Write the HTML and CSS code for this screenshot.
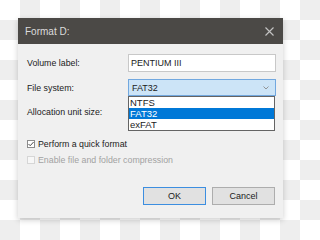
FILE: index.html
```html
<!DOCTYPE html>
<html>
<head>
<meta charset="utf-8">
<link rel="stylesheet" href="styles.css">
</head>
<body>
<div class="dialog">
  <div class="titlebar">
    <span class="title">Format D:</span>
    <svg class="close" width="9" height="9" viewBox="0 0 9 9"><path d="M0.5 0.5L8.5 8.5M8.5 0.5L0.5 8.5" stroke="#c4c4c4" stroke-width="1.1" fill="none"/></svg>
  </div>
  <div class="content">
    <div class="form">
      <label class="lbl">Volume label:</label>
      <div class="input">PENTIUM III</div>
      <label class="lbl">File system:</label>
      <div class="combo">
        <div class="select">
          <span>FAT32</span>
          <svg width="6" height="4" viewBox="0 0 6 4"><path d="M0.5 0.5L3 3L5.5 0.5" stroke="#8a8a8a" stroke-width="0.9" fill="none"/></svg>
        </div>
        <ul class="list">
          <li>NTFS</li>
          <li class="sel">FAT32</li>
          <li>exFAT</li>
        </ul>
      </div>
      <label class="lbl">Allocation unit size:</label>
      <div></div>
    </div>
    <div class="checks">
      <div class="check">
        <span class="box">
          <svg width="8" height="8" viewBox="0 0 8 8"><path d="M1.5 4L3.2 5.7L6.6 2" stroke="#333" stroke-width="0.9" fill="none"/></svg>
        </span>
        <span>Perform a quick format</span>
      </div>
      <div class="check disabled">
        <span class="box"></span>
        <span>Enable file and folder compression</span>
      </div>
    </div>
    <div class="buttons">
      <div class="btn default">OK</div>
      <div class="btn">Cancel</div>
    </div>
  </div>
</div>
</body>
</html>
```

FILE: styles.css
```css
html {
  background: repeating-conic-gradient(#eeeeee 0 25%, #ffffff 0 50%) 0 0 / 40px 40px;
  height: 100%;
}
body {
  margin: 0;
  padding: 18px;
  font-family: "Liberation Sans", Arial, sans-serif;
  font-size: 8.8px;
  color: #1b1b1b;
}
.dialog {
  width: 265px;
  height: 200px;
  background: #f0f0f0;
  box-shadow: 0 2px 6px rgba(0, 0, 0, 0.2);
  display: flex;
  flex-direction: column;
}
.titlebar {
  height: 26px;
  background: #4b4946;
  display: flex;
  align-items: center;
  justify-content: space-between;
  padding: 0 9px 0 7px;
  flex-shrink: 0;
}
.title {
  color: #dcdcdc;
  font-size: 10px;
}
.content {
  padding: 10px 7px 0 9px;
}
.form {
  display: grid;
  grid-template-columns: 101px 148px;
  grid-template-rows: 18px 17px 17px;
  row-gap: 7px;
  align-items: center;
}
.input {
  height: 18px;
  box-sizing: border-box;
  border: 1px solid #c8c8c8;
  background: #fff;
  padding: 0 2px;
  display: flex;
  align-items: center;
  font-size: 9px;
}
.combo {
  position: relative;
  height: 17px;
}
.select {
  height: 17px;
  box-sizing: border-box;
  border: 1px solid #72a8df;
  background: #cce4f7;
  display: flex;
  align-items: center;
  justify-content: space-between;
  padding: 0 6px 0 3px;
  font-size: 9px;
}
.list {
  position: absolute;
  top: 17px;
  left: 0;
  width: 147px;
  margin: 0;
  padding: 0;
  list-style: none;
  background: #fff;
  border: 1px solid #646464;
  box-sizing: border-box;
  z-index: 2;
  font-size: 9.5px;
}
.list li {
  height: 11px;
  line-height: 11px;
  padding-left: 1px;
}
.list li.sel {
  background: #0078d7;
  color: #fff;
}
.checks {
  margin-top: 18px;
  display: flex;
  flex-direction: column;
  gap: 4px;
}
.check {
  display: flex;
  align-items: center;
  gap: 3px;
  height: 12px;
}
.box {
  width: 8px;
  height: 8px;
  border: 1px solid #8c8c8c;
  background: #fff;
  box-sizing: border-box;
  display: flex;
  align-items: center;
  justify-content: center;
  margin-right: 0;
}
.box svg {
  flex-shrink: 0;
}
.check.disabled {
  color: #a2a2a2;
}
.check.disabled .box {
  border-color: #d6d6d6;
  background: #f7f7f7;
}
.buttons {
  margin-top: 21px;
  display: flex;
  justify-content: flex-end;
  gap: 6px;
  padding-right: 1px;
}
.btn {
  width: 63px;
  height: 18px;
  box-sizing: border-box;
  border: 1px solid #adadad;
  background: #e1e1e1;
  display: flex;
  align-items: center;
  justify-content: center;
  font-size: 9px;
}
.btn.default {
  border-color: #3c8ee0;
}
```
